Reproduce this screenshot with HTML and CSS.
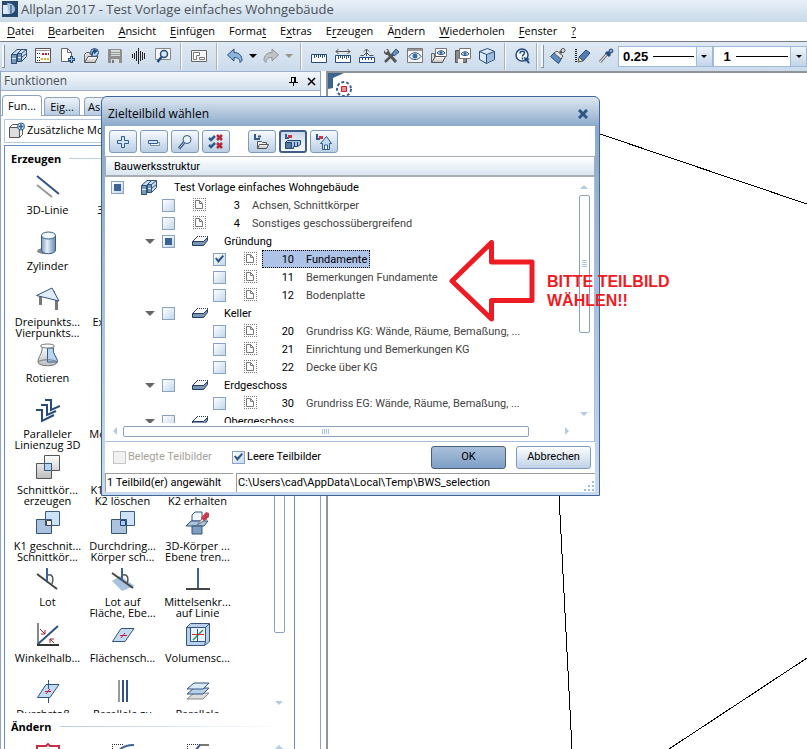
FILE: index.html
```html
<!DOCTYPE html>
<html lang="de">
<head>
<meta charset="utf-8">
<title>Allplan 2017 - Test Vorlage einfaches Wohngebäude</title>
<link rel="stylesheet" href="styles.css">
</head>
<body>
<svg class="sprite" aria-hidden="true">
  <defs>
    <linearGradient id="blue" x1="0" y1="0" x2="0" y2="1"><stop offset="0" stop-color="#e3effb"/><stop offset="1" stop-color="#8fabc9"/></linearGradient>
    <linearGradient id="grey" x1="0" y1="0" x2="0" y2="1"><stop offset="0" stop-color="#ffffff"/><stop offset="1" stop-color="#bdbdbd"/></linearGradient>
    <linearGradient id="tube" x1="0" y1="0" x2="1" y2="0"><stop offset="0" stop-color="#7d9cbf"/><stop offset=".4" stop-color="#e6f1fc"/><stop offset="1" stop-color="#6787ac"/></linearGradient>
  </defs>
  <symbol id="i-building" viewBox="0 0 16 16"><path d="M.5 6.500 6 1.500h9.500v7l-5 5H5.500v2h-5z" fill="#c9ddf2" stroke="#2f5079"/><path d="M.5 6.500h5v9h-5zM6.500 5.500h4v8h-4z" fill="#7797bd" stroke="#2f5079"/><path d="m5.500 6.500 5-5M10.500 5.500l5-4M10.500 9.500l5-4" fill="none" stroke="#2f5079"/><path d="M1 10.500h4M7 9.500h3" stroke="#e3effb"/></symbol>
  <symbol id="i-palette" viewBox="0 0 16 16"><path d="M.5.500h15v14H.5z" fill="#fff" stroke="#555"/><path d="M1 2.500h14" stroke="#999"/><path d="M2 5.500h4M2 9.500h4M2 12.500h4" stroke="#222" stroke-dasharray="1 1"/><path d="M7 6h7" stroke="#c01525" stroke-width="2" stroke-dasharray="2 1"/><path d="M6 11h8" stroke="#eea41c" stroke-width="2" stroke-dasharray="2 1"/></symbol>
  <symbol id="i-new" viewBox="0 0 16 16"><path d="M2.500.500h6l4 4v9h-10z" fill="#fff" stroke="#666"/><path d="M8.500.500v4h4" fill="none" stroke="#666"/><path d="M12.500 8v7M9 11.500h7" stroke="#244c7d" stroke-width="3"/><path d="M12.500 9v5M10 11.500h5" stroke="#9bc0e6"/></symbol>
  <symbol id="i-open" viewBox="0 0 16 16"><path d="M1.500 14.500V6.500l2-2h3l1 2h5v8z" fill="#ddd" stroke="#666"/><path d="M1.500 14.500 5 8.500h10l-3 6z" fill="url(#grey)" stroke="#555"/><circle cx="11.500" cy="4.500" r="4" fill="#b8d3ee" stroke="#244c7d"/><path d="M9 7c0-3 1-4 3-4M10.500 1.500 13.500 3l-2.500 2.500" fill="none" stroke="#244c7d" stroke-width="1.500"/></symbol>
  <symbol id="i-save" viewBox="0 0 16 16"><path d="M1 1h13l1 1v13H1z" fill="#8e8e8e"/><path d="M4 2h9v6H4z" fill="#d9dcdf"/><path d="M4 4.500h9M4 6.500h9" stroke="#999"/><path d="M4 11h8v4H4z" fill="#d9dcdf"/><path d="M5 12h2v3H5z" fill="#777"/></symbol>
  <symbol id="i-wave" viewBox="0 0 16 16"><path d="M1.500 6v4M3.500 5v6M5.500 3v10M7.500 0v16M9.500 3v10M11.500 4v8M13.500 5v6" stroke="#222"/></symbol>
  <symbol id="i-preview" viewBox="0 0 16 16"><path d="M.5.500h15v11H.5z" fill="#f3f7fb" stroke="#888"/><circle cx="9" cy="6" r="3.500" fill="#d6e7f8" stroke="#244c7d" stroke-width="1.500"/><path d="m6.500 9-4 5" stroke="#244c7d" stroke-width="2.500"/></symbol>
  <symbol id="i-layout" viewBox="0 0 16 16"><path d="M.5 2.500h15v11H.5z" fill="#f5f5f5" stroke="#666"/><path d="M2.500 4.500h6v3h-3v4h-3zM8.500 9.500h5v2h-5z" fill="#fff" stroke="#777"/></symbol>
  <symbol id="i-undo" viewBox="0 0 16 16"><path d="M.5 7 7 1v3.500c5 0 8 3 8 8l-2 2C13 11 11 9.500 7 9.500V13z" fill="#8fb4dc" stroke="#244c7d"/></symbol>
  <symbol id="i-redo" viewBox="0 0 16 16"><path d="M15.500 7 9 1v3.500c-5 0-8 3-8 8l2 2c0-3.500 2-5 6-5V13z" fill="#bfc3c7" stroke="#8e9296"/></symbol>
  <symbol id="i-ruler" viewBox="0 0 16 16"><path d="M.5 6.500h15v8H.5z" fill="#fff" stroke="#244c7d"/><path d="M3.500 7v3M5.500 7v2M7.500 7v3M9.500 7v2M11.500 7v3M13.500 7v2" stroke="#244c7d"/></symbol>
  <symbol id="i-ruler2" viewBox="0 0 16 16"><path d="M.5 7.500h15v7H.5z" fill="#fff" stroke="#244c7d"/><path d="M3.500 8v3M5.500 8v2M7.500 8v3M9.500 8v2M11.500 8v3M13.500 8v2" stroke="#244c7d"/><path d="M1 3.500h14M3.500 1 1 3.500 3.500 6M12.500 1 15 3.500 12.500 6" fill="none" stroke="#555"/></symbol>
  <symbol id="i-ruler3" viewBox="0 0 16 16"><path d="M.5 9.500h15v5H.5z" fill="#fff" stroke="#244c7d"/><path d="M3.500 10v2M6.500 10v2M9.500 10v2M12.500 10v2" stroke="#244c7d"/><path d="M1.500 7.500h3l3-3 3 3h4M7.500 8V1M5 3.500 7.500 1 10 3.500" fill="none" stroke="#555"/></symbol>
  <symbol id="i-tools" viewBox="0 0 16 16"><path d="m2 14 11-11" stroke="#555" stroke-width="2.500"/><path d="m9 6 4-5 3 3-5 4z" fill="#6f94be" stroke="#244c7d"/><path d="m4 4 9 10" stroke="#555" stroke-width="3"/><path d="M1 2v3l2 2h3l1-2-2-4H3l2 2-2 2z" fill="#555"/></symbol>
  <symbol id="i-eye" viewBox="0 0 16 16"><path d="M.5.500h15v14H.5z" fill="#f5f7f9" stroke="#777"/><path d="M1 2h14" stroke="#999" stroke-width="2"/><path d="M2 8.500c3-5 9-5 12 0-3 4-9 4-12 0z" fill="#fff" stroke="#244c7d"/><circle cx="8" cy="8" r="2.500" fill="#3b6ba5"/></symbol>
  <symbol id="i-eyeopen" viewBox="0 0 16 16"><path d="M4.500.500h11v8h-11z" fill="#fff" stroke="#777"/><path d="M6 5c2-3 6-3 8 0-2 2-6 2-8 0z" fill="#dbe9f7" stroke="#244c7d"/><circle cx="10" cy="4.500" r="1.500" fill="#3b6ba5"/><path d="M.5 14.500V5.500h3v4" fill="#ddd" stroke="#666"/><path d="m.5 14.500 4-6h10l-3 6z" fill="url(#grey)" stroke="#555"/></symbol>
  <symbol id="i-eyesave" viewBox="0 0 16 16"><path d="M.5 2.500h11v12H.5z" fill="#8a8a8a" stroke="#555"/><path d="M3 11h5v4H3z" fill="#eee"/><path d="M4.500.500h11v10h-11z" fill="#fff" stroke="#777"/><path d="M6 6c2-3 6-3 8 0-2 2-6 2-8 0z" fill="#dbe9f7" stroke="#244c7d"/><circle cx="10" cy="5.500" r="1.500" fill="#3b6ba5"/></symbol>
  <symbol id="i-cube" viewBox="0 0 16 16"><path d="m.5 3.500 8-3 7 3v8l-8 4-7-4z" fill="#dbe9f7" stroke="#244c7d"/><path d="m8 7 7-3v7l-7 4z" fill="#9dbcdd"/><path d="m.5 3.500 7 3 8-3M7.500 6.500v9" fill="none" stroke="#244c7d"/></symbol>
  <symbol id="i-help" viewBox="0 0 16 16"><circle cx="7" cy="7" r="6" fill="#f3f8fd" stroke="#244c7d" stroke-width="1.500"/><path d="M5 5.500c0-3 4.500-3 4.500-.5 0 1.500-2 1.500-2 3.500M7.500 9.500v2" fill="none" stroke="#244c7d" stroke-width="1.500"/><path d="m9 9 6 2-2 1 2 3-2 .5-2-3-1 2z" fill="#244c7d"/></symbol>
  <symbol id="i-brush" viewBox="0 0 16 16"><path d="m.5 8.500 4-4 7 6-3 5z" fill="#5f8cc0" stroke="#244c7d"/><path d="m4 5 3-2 6 5-2 3z" fill="#e9e9e9" stroke="#555"/><path d="m10 5 2-2" stroke="#555" stroke-width="3"/><circle cx="13" cy="2.500" r="2" fill="#ddd" stroke="#555"/></symbol>
  <symbol id="i-pencil" viewBox="0 0 16 16"><path d="M2 1v14" stroke="#222" stroke-width="2" stroke-dasharray="1 1"/><path d="m5 9 7-7 4 3-7 8z" fill="#4f7db3" stroke="#244c7d"/><path d="m5 9 4 4-5 1z" fill="#f0d9b0" stroke="#555"/></symbol>
  <symbol id="i-pipette" viewBox="0 0 16 16"><path d="m2 14 7-8" stroke="#777" stroke-width="3"/><path d="m2 14 7-8" stroke="#fff"/><path d="m8 4 4 4M10 6l3-3" stroke="#244c7d" stroke-width="3"/><circle cx="13" cy="3" r="2" fill="#7ea6d3" stroke="#244c7d"/></symbol>
  <symbol id="i-page" viewBox="0 0 16 16"><path d="M1 1.500h13M1 13.500h13M1.500 1v13M13.500 1v13" fill="none" stroke="#7a7a7a" stroke-dasharray="1 1"/><path d="M3.500 3.500h4l3 3v5h-7zM7.500 3.500v3h3" fill="#fff" stroke="#7a7a7a"/></symbol>
  <symbol id="i-slab" viewBox="0 0 16 16"><path d="m.5 8.500 5-5h10l-4 5z" fill="#fff"/><path d="M5 3.500h11" stroke="#1e3e68" stroke-dasharray="1 1"/><path d="m.5 8.500 5-5M11.500 8.500l4-4" stroke="#1e3e68"/><path d="M.5 8.500h11l4-4v3l-4 5H.5z" fill="#7f95ae" stroke="#1e3e68"/></symbol>
  <symbol id="i-plus" viewBox="0 0 16 16"><path d="M6.500 2.500h3v4h4v3h-4v4h-3v-4h-4v-3h4z" fill="#d5e6f8" stroke="#2f5b90"/></symbol>
  <symbol id="i-minus" viewBox="0 0 16 16"><path d="M4.500 8.500h9v3h-9z" fill="#fff" stroke="#6c8db5"/><path d="M2.500 6.500h9v3h-9z" fill="#d5e6f8" stroke="#2f5b90"/></symbol>
  <symbol id="i-search" viewBox="0 0 16 16"><circle cx="10" cy="5.500" r="4" fill="#eaf3fc" stroke="#33547d"/><path d="m7 8.500-5 6" stroke="#33547d" stroke-width="3"/><path d="m7 8.500-5 6" stroke="#b9cde2"/></symbol>
  <symbol id="i-checks" viewBox="0 0 16 16"><path d="m1 4 2 2 4-4M1 11l2 2 4-4" fill="none" stroke="#2f5b90" stroke-width="2.500"/><path d="m9 1 5 5m0-5L9 6M9 9l5 5m0-5-5 5" stroke="#b92338" stroke-width="2.500"/></symbol>
  <symbol id="i-treefold" viewBox="0 0 16 16"><path d="M1 0v5h5" fill="none" stroke="#2f5b90" stroke-width="2"/><path d="M4 2.500h3" stroke="#2f5b90" stroke-width="2"/><path d="M3.500 14.500v-7h4l1 1h4v2" fill="#eee" stroke="#555"/><path d="m3.500 14.500 2-4h9l-2 4z" fill="url(#grey)" stroke="#555"/></symbol>
  <symbol id="i-treebld" viewBox="0 0 16 16"><path d="M1 0v4h3" fill="none" stroke="#2f5b90" stroke-width="2"/><path d="M3 1h4v3H3z" fill="#d12f42"/><path d="m.5 8.500 2-2h13v4l-3 2h-4v2h-8z" fill="#a9c4e0" stroke="#23456f"/><path d="M.5 8.500h6v6h-6z" fill="#54779f" stroke="#23456f"/><path d="M9.500 8v4M12.500 8v4" stroke="#23456f"/></symbol>
  <symbol id="i-treehouse" viewBox="0 0 16 16"><path d="M1 0v5h3" fill="none" stroke="#2f5b90" stroke-width="2"/><path d="M3 2h4v3H3z" fill="#d12f42"/><path d="m4.500 9.500 6-7 5 7h-2v6h-7v-6z" fill="#c2d8ee" stroke="#2f5b90"/><path d="M8.500 15v-4h3v4" fill="#fff" stroke="#2f5b90"/></symbol>
  <symbol id="i-extra" viewBox="0 0 16 16"><path d="M.5 5.500h10v10H.5z" fill="#ddd" stroke="#555"/><path d="m.5 5.500 3-3h9M10.500 15.500l3-3V8" fill="none" stroke="#555"/><circle cx="12" cy="4.500" r="3.500" fill="#dbe9f7" stroke="#2f5b90"/><path d="M12 2v5M9.500 4.500h5" stroke="#2f5b90" stroke-width="1.500"/></symbol>

  <symbol id="f-line" viewBox="0 0 24 24"><path d="m1 1 22 18" stroke="#2f5384" stroke-width="2"/><path d="m1 10 15 12" stroke="#999" stroke-width="2"/></symbol>
  <symbol id="f-cyl" viewBox="0 0 24 24"><ellipse cx="8" cy="20" rx="7" ry="3" fill="#888"/><path d="M5.500 4v15c0 5 14 5 14 0V4z" fill="url(#tube)" stroke="#3a5c86"/><ellipse cx="12.500" cy="4.500" rx="7" ry="3.500" fill="#f1f7fd" stroke="#3a5c86"/></symbol>
  <symbol id="f-points" viewBox="0 0 24 24"><path d="M4.500 9v9M17.500 4v6M20.500 13v10" stroke="#777" stroke-width="3"/><path d="M.5 8.500 16 1l7 13z" fill="#deecfb" stroke="#33547d"/></symbol>
  <symbol id="f-rotate" viewBox="0 0 24 24"><path d="M6 3c1 8-4 10-4 16 0 5 19 5 19 0 0-6-6-8-4-16z" fill="url(#grey)" stroke="#777"/><path d="M11.500 5h6c-1 7 4 9 4 14h-10z" fill="#b8d4ef" stroke="#2f5b90"/><ellipse cx="11.500" cy="3" rx="7" ry="2" fill="#fff" stroke="#777"/><path d="M2 19c3-3 16-3 19 0" fill="none" stroke="#777"/></symbol>
  <symbol id="f-zigzag" viewBox="0 0 24 24"><path d="M9 1h6v10l9-4M5 6h6v10l9-4M0 11h6v11l12-6" fill="none" stroke="#294b7a" stroke-width="2"/></symbol>
  <symbol id="f-inter" viewBox="0 0 24 24"><path d="M.5 8.500h15v15H.5zM8.500.500h15v15h-15z" fill="url(#grey)" stroke="#555"/><path d="M8.500 8.500h7v7h-7z" fill="#b7d1ee" stroke="#2f5b90"/></symbol>
  <symbol id="f-cut" viewBox="0 0 24 24"><path d="M9.500.500h14v14h-8v-6h-6z" fill="#cfe3f8" stroke="#3a5c86"/><path d="M.5 8.500h9v6h6v8H.5z" fill="#abc3dd" stroke="#33547d"/><path d="M10.500 9.500h5v5h-5z" fill="#eee" stroke="#444"/></symbol>
  <symbol id="f-pierce" viewBox="0 0 24 24"><path d="M9.500.500h14v14h-14z" fill="#cfe3f8" stroke="#3a5c86"/><path d="M.5 8.500h15v14H.5z" fill="#abc3dd" stroke="#33547d"/><path d="M9.500 9.500h5v5h-5z" fill="#a9c9ed" stroke="#1f4375"/></symbol>
  <symbol id="f-knife" viewBox="0 0 24 24"><path d="M6 4 9 1h7v9H6z" fill="#f1f7fd" stroke="#33547d"/><path d="M0 15 5 10h17l-4 5z" fill="#a9c3df" stroke="#33547d"/><path d="M6 15h10v8H6z" fill="#7f9fc2" stroke="#33547d"/><path d="m11 14 7-9 3 3z" fill="#ddd" stroke="#777"/><path d="m15 7 5-6 3 1v4l-5 4z" fill="#c93c4d"/></symbol>
  <symbol id="f-perp" viewBox="0 0 24 24"><path d="m1 7 20 15" stroke="#444" stroke-width="2"/><path d="M11 1v13" stroke="#3b6299" stroke-width="2"/><path d="M12 8c5-1 6 4 4 9" fill="none" stroke="#555" stroke-width="1.500"/></symbol>
  <symbol id="f-perpface" viewBox="0 0 24 24"><path d="m1 14 8-5 15 10-13 5z" fill="#a9c3df"/><path d="m1 6 21 15" stroke="#444" stroke-width="2"/><path d="M11 1v13" stroke="#3b6299" stroke-width="2"/><path d="M12 8c5-1 6 4 4 9" fill="none" stroke="#555" stroke-width="1.500"/></symbol>
  <symbol id="f-mid" viewBox="0 0 24 24"><path d="M0 22h24" stroke="#444" stroke-width="2"/><path d="M12 1v20" stroke="#3b6299" stroke-width="2"/></symbol>
  <symbol id="f-angle" viewBox="0 0 24 24"><path d="M2 0v22" stroke="#888" stroke-width="2"/><path d="M1 22h22" stroke="#333" stroke-width="2"/><path d="M2 21 22 3" stroke="#2f5384" stroke-width="2"/><path d="m4 6 5 5m0-4v4H5M18 20l-4-4m0 4v-4h4" fill="none" stroke="#a51c30"/></symbol>
  <symbol id="f-face" viewBox="0 0 24 24"><path d="M1.500 18.500 10 5.500h13l-9 13z" fill="#c2daf2" stroke="#33547d"/><path d="M9 12.500h7M14 10l-4 5" stroke="#c32036"/></symbol>
  <symbol id="f-volume" viewBox="0 0 24 24"><path d="M.5 4.500 4.500.500h19v18l-5 4H.5z" fill="#b8d0e9" stroke="#33547d"/><path d="M4.500 4.500h15v14h-15z" fill="#e9f3fd" stroke="#33547d"/><path d="m.5 4.500 4 0M19.500 4.500l4-4M19.500 18.500l-1 4" stroke="#33547d"/><path d="m7 17 10-10" stroke="#2b9a45" stroke-width="1.500"/><path d="M6 11.500h12" stroke="#e02b2b"/><path d="M11.500 6v12" stroke="#33547d"/></symbol>
  <symbol id="f-piercept" viewBox="0 0 24 24"><path d="M1.500 18.500 10 5.500h13l-9 13z" fill="#c2daf2" stroke="#33547d"/><path d="M12.500 1v9M12.500 18v6" stroke="#2f5384"/><path d="M9 12.500h6M14 10l-4 5" stroke="#c32036"/></symbol>
  <symbol id="f-parallel" viewBox="0 0 24 24"><path d="M8 1v22" stroke="#999" stroke-width="2"/><path d="M12 1v22M16 1v22" stroke="#2f5384" stroke-width="2"/></symbol>
  <symbol id="f-layers" viewBox="0 0 24 24"><path d="m1 20 7-6h15l-6 6z" fill="#ddd" stroke="#888"/><path d="m1 15 7-6h15l-6 6z" fill="#b7cfe8" stroke="#33547d"/><path d="m1 10 7-6h15l-6 6z" fill="#dbeafa" stroke="#33547d"/></symbol>
  <symbol id="f-red" viewBox="0 0 24 24"><path d="M1 24V3h9l2-2 2 2h9v21" fill="none" stroke="#c32f46" stroke-width="2"/></symbol>
  <symbol id="f-fillet" viewBox="0 0 24 24"><path d="M1.500 1v23M1 1.500h11" fill="none" stroke="#333" stroke-dasharray="1 1"/><path d="M3 24C4 8 10 2 23 2" fill="none" stroke="#3b6299" stroke-width="2"/></symbol>
  <symbol id="f-chamfer" viewBox="0 0 24 24"><path d="M1.500 1v23M1 1.500h13" fill="none" stroke="#333" stroke-dasharray="1 1"/><path d="M2 24v-8L14 2" fill="none" stroke="#3b6299" stroke-width="2"/><path d="M14 2h9" stroke="#777" stroke-width="2"/></symbol>
</svg>

<header class="titlebar">
  <svg class="app-icon" viewBox="0 0 16 16"><path d="M0 0h16v16H0z" fill="#27496f"/><path d="M1 4h6v9H1z" fill="#dce8f3"/><path d="M5 2c5 0 8 3 8 6s-3 5-6 5z" fill="#a7c2dc"/><path d="M8 4h2v9H8z" fill="#5f83ab"/></svg>
  <span>Allplan 2017 - Test Vorlage einfaches Wohngebäude</span>
</header>

<nav class="menubar">
  <button><u>D</u>atei</button><button><u>B</u>earbeiten</button><button><u>A</u>nsicht</button><button><u>E</u>infügen</button><button>Forma<u>t</u></button><button>E<u>x</u>tras</button><button>E<u>r</u>zeugen</button><button>Ä<u>n</u>dern</button><button><u>W</u>iederholen</button><button><u>F</u>enster</button><button><u>?</u></button>
</nav>

<div class="toolbar">
  <i class="handle"></i>
  <button class="tool" aria-label="Bauwerksstruktur"><svg><use href="#i-building"/></svg></button>
  <button class="tool" aria-label="Palette"><svg><use href="#i-palette"/></svg></button>
  <button class="tool" aria-label="Neu"><svg><use href="#i-new"/></svg></button>
  <button class="tool" aria-label="Öffnen"><svg><use href="#i-open"/></svg></button>
  <button class="tool" aria-label="Speichern"><svg><use href="#i-save"/></svg></button>
  <button class="tool" aria-label="Messen"><svg><use href="#i-wave"/></svg></button>
  <button class="tool" aria-label="Vorschau"><svg><use href="#i-preview"/></svg></button>
  <i class="sep"></i>
  <button class="tool" aria-label="Layout"><svg><use href="#i-layout"/></svg></button>
  <i class="sep"></i>
  <button class="tool" aria-label="Rückgängig"><svg><use href="#i-undo"/></svg></button>
  <button class="drop" aria-label="Rückgängig-Liste"></button>
  <button class="tool" aria-label="Wiederherstellen"><svg><use href="#i-redo"/></svg></button>
  <button class="drop dim" aria-label="Wiederherstellen-Liste"></button>
  <i class="sep"></i>
  <button class="tool" aria-label="Länge"><svg><use href="#i-ruler"/></svg></button>
  <button class="tool" aria-label="Abstand"><svg><use href="#i-ruler2"/></svg></button>
  <button class="tool" aria-label="Koordinaten"><svg><use href="#i-ruler3"/></svg></button>
  <button class="tool" aria-label="Optionen"><svg><use href="#i-tools"/></svg></button>
  <button class="tool" aria-label="Ansicht"><svg><use href="#i-eye"/></svg></button>
  <button class="tool" aria-label="Ansicht öffnen"><svg><use href="#i-eyeopen"/></svg></button>
  <button class="tool" aria-label="Ansicht speichern"><svg><use href="#i-eyesave"/></svg></button>
  <button class="tool" aria-label="Isometrie"><svg><use href="#i-cube"/></svg></button>
  <i class="sep"></i>
  <button class="tool" aria-label="Hilfe"><svg><use href="#i-help"/></svg></button>
  <i class="sep end"></i>
  <i class="handle"></i>
  <button class="tool" aria-label="Format übernehmen"><svg><use href="#i-brush"/></svg></button>
  <button class="tool" aria-label="Stift"><svg><use href="#i-pencil"/></svg></button>
  <button class="tool" aria-label="Pipette"><svg><use href="#i-pipette"/></svg></button>
  <span class="combo"><select aria-label="Stiftdicke"><option>0.25</option></select><i class="stroke"></i><i class="caret"></i></span>
  <span class="combo num"><select aria-label="Strichart"><option>1</option></select><i class="stroke"></i><i class="caret"></i></span>
</div>

<main class="workspace">
  <aside class="sidebar">
    <div class="panel-head">
      <span>Funktionen</span>
      <button aria-label="Anheften"><svg viewBox="0 0 9 9"><path d="M2.500 0v5M2 .500h4.500M5.500 0v5M6.500 0v5M0 5.500h9M4.500 6v3" stroke="#000" fill="none"/></svg></button>
      <button aria-label="Schließen"><svg viewBox="0 0 9 9"><path d="m1 1 7 7M8 1 1 8" stroke="#000" stroke-width="1.500"/></svg></button>
    </div>
    <div class="tabs"><button class="tab active">Fun...</button><button class="tab">Eig...</button><button class="tab">As...</button></div>
    <div class="palette">
      <button class="extra"><svg><use href="#i-extra"/></svg>Zusätzliche Module</button>
      <div class="groups">
        <section class="group main-group">
          <h2>Erzeugen</h2>
          <div class="grid">
            <button><svg><use href="#f-line"/></svg>3D-Linie</button>
            <button><svg></svg>3D-Fläche</button>
            <button></button>
            <button><svg><use href="#f-cyl"/></svg>Zylinder</button>
            <button></button>
            <button></button>
            <button><svg><use href="#f-points"/></svg>Dreipunkts...<br>Vierpunkts...</button>
            <button><svg></svg>Extrudieren</button>
            <button></button>
            <button><svg><use href="#f-rotate"/></svg>Rotieren</button>
            <button></button>
            <button></button>
            <button><svg><use href="#f-zigzag"/></svg>Paralleler<br>Linienzug 3D</button>
            <button><svg></svg>Modifikatio...</button>
            <button></button>
            <button><svg><use href="#f-inter"/></svg>Schnittkör...<br>erzeugen</button>
            <button><svg></svg>K1 schneid...<br>K2 löschen</button>
            <button><svg></svg><br>K2 erhalten</button>
            <button><svg><use href="#f-cut"/></svg>K1 geschnit...<br>Schnittkör...</button>
            <button><svg><use href="#f-pierce"/></svg>Durchdring...<br>Körper sch...</button>
            <button><svg><use href="#f-knife"/></svg>3D-Körper ...<br>Ebene tren...</button>
            <button><svg><use href="#f-perp"/></svg>Lot</button>
            <button><svg><use href="#f-perpface"/></svg>Lot auf<br>Fläche, Ebe...</button>
            <button><svg><use href="#f-mid"/></svg>Mittelsenkr...<br>auf Linie</button>
            <button><svg><use href="#f-angle"/></svg>Winkelhalb...</button>
            <button><svg><use href="#f-face"/></svg>Flächensch...</button>
            <button><svg><use href="#f-volume"/></svg>Volumensc...</button>
            <button><svg><use href="#f-piercept"/></svg>Durchstoß...</button>
            <button><svg><use href="#f-parallel"/></svg>Parallele zu</button>
            <button><svg><use href="#f-layers"/></svg>Parallele</button>
          </div>
          <div class="vbar"><i class="up"></i><i class="thumb"></i><i class="down"></i></div>
        </section>
        <section class="group next-group">
          <h2>Ändern</h2>
          <div class="grid">
            <button aria-label="Modifizieren"><svg><use href="#f-red"/></svg></button>
            <button aria-label="Ausrunden"><svg><use href="#f-fillet"/></svg></button>
            <button aria-label="Fasen"><svg><use href="#f-chamfer"/></svg></button>
          </div>
          <div class="vbar"><i class="up"></i></div>
        </section>
      </div>
    </div>
  </aside>
  <section class="canvas">
    <svg class="drawing" viewBox="0 0 479 676"><path d="M272 61 479 131M231 422l13 254M341 676l138-91" stroke="#000" fill="none" shape-rendering="crispEdges"/><path d="M0 0h16L5 5v10L0 16z" fill="#3d6391"/><circle cx="16" cy="16" r="7" fill="#fff" stroke="#3d6391" stroke-dasharray="3 2" stroke-width="2"/><path d="M13.500 13.500h5v5h-5z" fill="#f08c94" stroke="#c32036"/></svg>
  </section>
</main>

<div class="dialog" role="dialog" aria-labelledby="dlg-title">
  <header class="dlg-title"><span id="dlg-title">Zielteilbild wählen</span><button aria-label="Schließen"><svg viewBox="0 0 10 10"><path d="m1 1 8 8M9 1 1 9" stroke="#2f5583" stroke-width="3"/></svg></button></header>
  <div class="dlg-body">
    <div class="dlg-tools">
      <button aria-label="Aufklappen"><svg><use href="#i-plus"/></svg></button>
      <button aria-label="Zuklappen"><svg><use href="#i-minus"/></svg></button>
      <button aria-label="Suchen"><svg><use href="#i-search"/></svg></button>
      <button aria-label="Auswahl umkehren"><svg><use href="#i-checks"/></svg></button>
      <button class="first" aria-label="Zeichnungsstruktur"><svg><use href="#i-treefold"/></svg></button>
      <button class="pressed" aria-label="Bauwerksstruktur"><svg><use href="#i-treebld"/></svg></button>
      <button aria-label="Ableitungen"><svg><use href="#i-treehouse"/></svg></button>
    </div>
    <div class="col-head">Bauwerksstruktur</div>
    <div class="tree-box">
      <div class="tree">
        <div class="row root"><input type="checkbox" class="mixed" id="r0"><svg><use href="#i-building"/></svg><label for="r0">Test Vorlage einfaches Wohngebäude</label></div>
        <div class="row file"><input type="checkbox" id="r1"><svg><use href="#i-page"/></svg><label for="r1"><b>3</b>Achsen, Schnittkörper</label></div>
        <div class="row file"><input type="checkbox" id="r2"><svg><use href="#i-page"/></svg><label for="r2"><b>4</b>Sonstiges geschossübergreifend</label></div>
        <div class="row floor"><i class="twist"></i><input type="checkbox" class="mixed" id="r3"><svg><use href="#i-slab"/></svg><label for="r3">Gründung</label></div>
        <div class="row leaf selected"><input type="checkbox" id="r4" checked><svg><use href="#i-page"/></svg><label for="r4"><b>10</b>Fundamente</label></div>
        <div class="row leaf"><input type="checkbox" id="r5"><svg><use href="#i-page"/></svg><label for="r5"><b>11</b>Bemerkungen Fundamente</label></div>
        <div class="row leaf"><input type="checkbox" id="r6"><svg><use href="#i-page"/></svg><label for="r6"><b>12</b>Bodenplatte</label></div>
        <div class="row floor"><i class="twist"></i><input type="checkbox" id="r7"><svg><use href="#i-slab"/></svg><label for="r7">Keller</label></div>
        <div class="row leaf"><input type="checkbox" id="r8"><svg><use href="#i-page"/></svg><label for="r8"><b>20</b>Grundriss KG: Wände, Räume, Bemaßung, ...</label></div>
        <div class="row leaf"><input type="checkbox" id="r9"><svg><use href="#i-page"/></svg><label for="r9"><b>21</b>Einrichtung und Bemerkungen KG</label></div>
        <div class="row leaf"><input type="checkbox" id="r10"><svg><use href="#i-page"/></svg><label for="r10"><b>22</b>Decke über KG</label></div>
        <div class="row floor"><i class="twist"></i><input type="checkbox" id="r11"><svg><use href="#i-slab"/></svg><label for="r11">Erdgeschoss</label></div>
        <div class="row leaf"><input type="checkbox" id="r12"><svg><use href="#i-page"/></svg><label for="r12"><b>30</b>Grundriss EG: Wände, Räume, Bemaßung, ...</label></div>
        <div class="row floor"><i class="twist"></i><input type="checkbox" id="r13"><svg><use href="#i-slab"/></svg><label for="r13">Obergeschoss</label></div>
      </div>
      <div class="vbar"><i class="up"></i><i class="thumb"><i class="grip"></i></i><i class="down"></i></div>
      <div class="hbar"><i class="left"></i><i class="thumb"><i class="grip"></i></i><i class="right"></i></div>
    </div>
    <div class="dlg-actions">
      <label class="check off"><input type="checkbox" disabled>Belegte Teilbilder</label>
      <label class="check"><input type="checkbox" checked>Leere Teilbilder</label>
      <button class="btn ok">OK</button>
      <button class="btn">Abbrechen</button>
    </div>
    <footer class="status"><span>1 Teilbild(er) angewählt</span><span class="path">C:\Users\cad\AppData\Local\Temp\BWS_selection<svg viewBox="0 0 10 10"><path d="M8 0h2v2H8zM4 4h2v2H4zM8 4h2v2H8zM0 8h2v2H0zM4 8h2v2H4zM8 8h2v2H8z" fill="#9dbce6"/></svg></span></footer>
  </div>
</div>

<div class="note">
  <svg viewBox="0 0 86 82"><path d="M3 41 42.500 2.500V22H83v38.500H42.500V79z" fill="none" stroke="#ed1c24" stroke-width="5" stroke-linejoin="round"/></svg>
  <p>BITTE TEILBILD<br>WÄHLEN!!</p>
</div>
</body>
</html>
```

FILE: styles.css
```css
* { box-sizing: border-box; }

body {
  margin: 0;
  height: 100vh;
  display: flex;
  flex-direction: column;
  overflow: hidden;
  position: relative;
  background: #fff;
  color: #000;
  font: 11px/14px "Open Sans", "Noto Sans", sans-serif;
}

button {
  margin: 0;
  padding: 0;
  border: 0;
  background: none;
  font: inherit;
  color: inherit;
}

svg { display: block; flex: none; }
.sprite { position: absolute; width: 0; height: 0; }

.titlebar {
  flex: none;
  height: 22px;
  padding: 0 2px 4px;
  display: flex;
  align-items: center;
  gap: 3px;
  background: linear-gradient(#e8f0f6, #c8d9ea);
  color: #4b5157;
  font-size: 13px;
}
.app-icon { width: 16px; height: 16px; }

.menubar {
  flex: none;
  height: 20px;
  padding: 0 7px 2px;
  display: flex;
  align-items: center;
  gap: 14px;
  border-bottom: 1px solid #7a7f85;
}
.menubar u { text-underline-offset: 2px; }

.toolbar {
  flex: none;
  height: 29px;
  padding-bottom: 1px;
  display: flex;
  align-items: center;
  background: linear-gradient(#e0e9f3, #cbdbec);
}
.handle {
  flex: none;
  width: 3px;
  height: 23px;
  margin: 0 2px;
  border: solid #8c9299;
  border-width: 0 1px 1px 0;
  background: #f4f7fa;
}
.sep {
  flex: none;
  width: 2px;
  height: 27px;
  margin: 0 5px;
  border-left: 1px solid #a9b0b8;
  background: #fff;
}
.sep.end { margin: 0 1px; }
.tool {
  flex: none;
  width: 24px;
  height: 24px;
  display: grid;
  place-items: center;
}
.tool svg { width: 16px; height: 16px; }
.drop {
  flex: none;
  width: 12px;
  height: 24px;
  display: grid;
  place-items: center;
}
.drop::before, .caret::before {
  content: "";
  border: 4px solid transparent;
  border-top-color: #000;
  border-bottom: 0;
}
.caret::before { border-width: 3px; border-bottom: 0; }
.drop.dim::before { border-top-color: #9a958a; }

.combo {
  flex: 1;
  min-width: 0;
  height: 21px;
  display: flex;
  align-items: center;
  border: 1px solid #9db9de;
  background: #fff;
}
.combo select {
  appearance: none;
  border: 0;
  margin: 0;
  padding: 0 4px;
  background: none;
  color: #000;
  font: bold 13px/19px "Liberation Sans", sans-serif;
}
.combo.num select { padding: 0 4px 0 10px; }
.stroke { flex: 1; height: 1px; margin-right: 2px; background: #000; }
.caret {
  width: 16px;
  height: 19px;
  display: grid;
  place-items: center;
  border-left: 1px solid #9db9de;
  background: linear-gradient(#eef4fa, #c3d5e8);
}

.workspace { flex: 1; min-height: 0; display: flex; gap: 5px; }

.sidebar {
  flex: none;
  width: 321px;
  display: flex;
  flex-direction: column;
  border: solid #8fa3bd;
  border-width: 0 1px;
}
.panel-head {
  flex: none;
  height: 20px;
  padding: 0 4px 0 3px;
  display: flex;
  align-items: center;
  gap: 9px;
  border: solid #9db0cb;
  border-width: 1px 0;
  background: linear-gradient(#f3f7fb, #d3e0ee);
  color: #4b5157;
  font-size: 12px;
}
.panel-head span { flex: 1; }
.panel-head svg { width: 9px; height: 9px; }

.tabs {
  flex: none;
  height: 25px;
  padding: 4px 1px 0;
  display: flex;
  align-items: flex-end;
  gap: 2px;
  border-bottom: 1px solid #8fa3bd;
}
.tab {
  height: 18px;
  width: 36px;
  border: 1px solid #8fa3bd;
  border-bottom: 0;
  border-radius: 4px 4px 0 0;
  background: linear-gradient(#eef4fa, #b6cbe1);
}
.tab + .tab + .tab { width: 44px; text-align: left; padding-left: 3px; margin-left: 2px; }
.tab.active { width: 40px; height: 21px; margin-bottom: -1px; background: #fff; }

.palette {
  flex: 1;
  min-height: 0;
  padding: 3px 25px 0 3px;
  display: flex;
  flex-direction: column;
  gap: 2px;
}
.extra {
  flex: none;
  height: 24px;
  padding: 0 4px 2px;
  display: flex;
  align-items: center;
  gap: 2px;
  border: 1px solid #b5c8e2;
}
.extra svg { width: 16px; height: 16px; }
.groups {
  flex: 1;
  min-height: 0;
  display: flex;
  flex-direction: column;
  border: 1px solid #6a8fc8;
  border-bottom: 0;
  overflow: hidden;
}
.group {
  flex: none;
  display: grid;
  grid-template-columns: 1fr 12px;
  padding-right: 9px;
  overflow: hidden;
}
.main-group { height: 567px; }
.next-group { flex: 1; padding-top: 7px; }
.group h2 {
  grid-column: 1 / 3;
  height: 29px;
  margin: 0;
  padding: 6px 0 0 6px;
  display: flex;
  align-items: flex-start;
  gap: 8px;
  font-size: 11px;
  line-height: 14px;
}
.next-group h2 { height: 23px; padding-top: 0; }
.group h2::after {
  content: "";
  flex: 1;
  height: 1px;
  margin-top: 6px;
  background: linear-gradient(90deg, #b9cce4, #fff);
}
.grid {
  display: grid;
  grid-template-columns: repeat(3, 75px);
  grid-auto-rows: 56px;
  padding-left: 5px;
}
.grid button {
  display: block;
  line-height: 11px;
  text-align: center;
  white-space: nowrap;
  align-self: start;
}
.grid svg { width: 24px; height: 24px; margin: 0 auto 5px; }

.vbar { display: flex; flex-direction: column; align-items: center; }
.vbar .thumb {
  width: 11px;
  border: 1px solid #8ba0bf;
  border-radius: 2px;
  display: grid;
  place-items: center;
}
.up, .down { border: 4px solid transparent; }
.up { border-top: 0; border-bottom-color: #b5cbe5; }
.down { border-bottom: 0; border-top-color: #b5cbe5; }
.main-group .thumb { height: 452px; }
.main-group .down { margin-top: 68px; }
.main-group .up { margin-bottom: 2px; }
.next-group .vbar { padding-top: 2px; }

.canvas {
  flex: 1;
  min-width: 0;
  border: solid #8f9499;
  border-width: 2px 0 0 2px;
  background: #fff;
}
.drawing { width: 479px; height: 676px; }

.dialog {
  position: absolute;
  left: 101px;
  top: 96px;
  width: 499px;
  padding: 0 4px 3px 3px;
  border: 1px solid #3f659b;
  border-radius: 6px 6px 0 0;
  background: linear-gradient(#dfe8f2, #8caacb 29px, #8caacb 40px, #c8daed);
}
.dlg-title {
  height: 29px;
  padding: 4px 7px 0 3px;
  display: flex;
  align-items: center;
  justify-content: space-between;
  font-size: 12px;
}
.dlg-title svg { width: 10px; height: 10px; }
.dlg-body {
  background: #fff;
  font: 11px/14px Roboto, "Liberation Sans", sans-serif;
}

.dlg-tools { display: flex; gap: 3px; padding: 4px 4px 3px; }
.dlg-tools button {
  width: 28px;
  height: 23px;
  display: grid;
  place-items: center;
  border: 1px solid #7f9abd;
  border-radius: 3px;
  background: linear-gradient(#f6fafd, #b9cee3);
}
.dlg-tools .first { margin-left: 15px; }
.dlg-tools .pressed { border: 2px solid #3f5f8a; background: linear-gradient(#c9d8e8, #f6fafd); }
.dlg-tools svg { width: 16px; height: 16px; }

.col-head {
  height: 21px;
  padding: 3px 8px 1px;
  border: 1px solid #a9aeb5;
  border-bottom-width: 2px;
  background: linear-gradient(#fff, #d9e5f0);
}

.tree-box {
  display: grid;
  grid-template-columns: 1fr 12px;
  padding-right: 4px;
  border: solid #a9c1df;
  border-width: 0 1px 1px 0;
}
.tree { height: 246px; padding-top: 1px; overflow: hidden; }
.row { height: 18px; display: flex; align-items: center; }
.row svg { width: 16px; height: 16px; margin-left: 17px; }
.row label { padding-top: 2px; white-space: nowrap; }
.row b { display: inline-block; text-align: right; font-weight: 400; color: #000; margin-right: 12px; }
.root { padding-left: 6px; }
.root label { margin-left: 17px; }
.file { padding-left: 57px; color: #444; }
.file b { width: 32px; }
.floor { padding-left: 40px; }
.floor label { margin-left: 16px; }
.leaf { padding-left: 108px; color: #444; }
.leaf label { margin-left: 3px; padding: 2px 2px 0; border: 1px solid transparent; }
.leaf b { width: 29px; }
.selected label { border: 1px dotted #000; background: #aec3e8; color: #000; }
.twist { width: 10px; margin-right: 7px; border: 5px solid transparent; border-top-color: #666; border-bottom: 0; }

input[type="checkbox"] {
  appearance: none;
  flex: none;
  width: 13px;
  height: 13px;
  margin: 0;
  display: grid;
  place-items: center;
  border: 1px solid #8ba3c3;
  background: linear-gradient(135deg, #fff, #c3d7ec);
}
input.mixed::before { content: ""; width: 7px; height: 7px; background: #3c6297; }
input:checked::before {
  content: "";
  width: 9px;
  height: 8px;
  background: #2f5384;
  clip-path: polygon(0 45%, 15% 30%, 38% 55%, 85% 0, 100% 15%, 38% 100%);
}
input[type="checkbox"]:disabled { border-color: #c5c5c5; background: #f1f1f1; }

.tree-box .vbar { padding-top: 8px; }
.tree-box .vbar .thumb { height: 138px; margin: 6px 0 79px; }
.grip { width: 5px; height: 8px; background: repeating-linear-gradient(#a9c4e2 0 1px, #fff 1px 2px); }
.hbar { grid-column: 1 / 3; height: 18px; display: flex; align-items: center; padding: 0 21px 2px 8px; }
.hbar .thumb {
  width: 406px;
  height: 11px;
  margin: 0 auto 0 6px;
  display: grid;
  place-items: center;
  border: 1px solid #8ba0bf;
  border-radius: 2px;
}
.hbar .grip { width: 8px; height: 5px; background: repeating-linear-gradient(90deg, #a9c4e2 0 1px, #fff 1px 2px); }
.left, .right { border: 4px solid transparent; }
.left { border-left: 0; border-right-color: #b5cbe5; }
.right { border-right: 0; border-left-color: #b5cbe5; }

.dlg-actions {
  height: 31px;
  padding: 0 4px 1px 8px;
  display: flex;
  align-items: center;
  gap: 10px;
}
.check { display: flex; align-items: center; gap: 2px; }
.check.off { width: 109px; color: #a5a298; }
.btn {
  width: 75px;
  height: 23px;
  border: 1px solid #7d9ac0;
  border-radius: 3px;
  background: linear-gradient(#fdfeff, #bfd2e6);
}
.ok { margin-left: auto; border-color: #4f5f73; background: linear-gradient(#a9c0da, #7e9fc6); }

.status { display: flex; gap: 3px; height: 19px; }
.status span {
  width: 128px;
  padding: 2px 1px 1px;
  border: solid #9c9c9c;
  border-width: 1px 0 0 1px;
  white-space: nowrap;
}
.status .path { flex: 1; display: flex; justify-content: space-between; }
.path svg { width: 10px; height: 10px; align-self: flex-end; }

.note {
  position: absolute;
  left: 449px;
  top: 240px;
  display: flex;
  gap: 12px;
  align-items: flex-start;
  color: #ed1c24;
  font: bold 16px/19px "Liberation Sans", Arial, sans-serif;
}
.note svg { width: 86px; height: 82px; }
.note p { margin: 32px 0 0; }
```
